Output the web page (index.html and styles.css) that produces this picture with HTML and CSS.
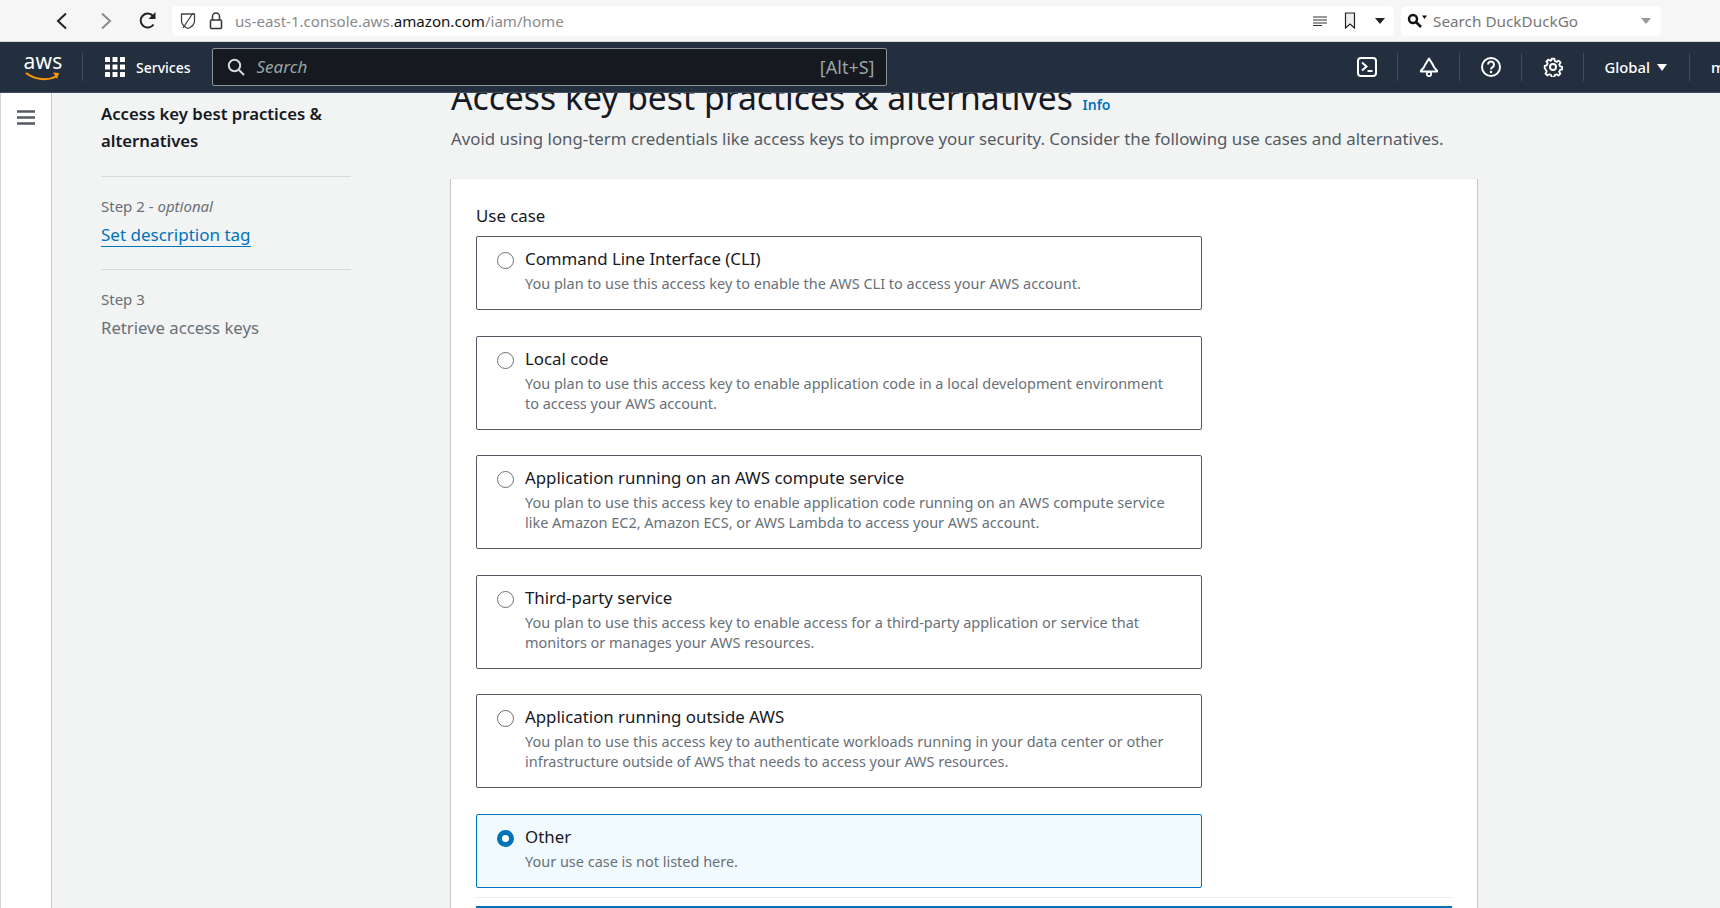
FILE: index.html
```html
<!DOCTYPE html>
<html lang="en">
<head>
<meta charset="utf-8">
<title>Access key best practices</title>
<link rel="stylesheet" href="styles.css">
</head>
<body>
<header class="browser">
  <svg class="b-back" width="14" height="18" viewBox="0 0 14 18"><path d="M11 1.5 3 9l8 7.500" fill="none" stroke="#222" stroke-width="2"/></svg>
  <svg class="b-fwd" width="14" height="18" viewBox="0 0 14 18"><path d="M3 1.500 11 9l-8 7.500" fill="none" stroke="#8a8a8a" stroke-width="2"/></svg>
  <svg class="b-reload" width="20" height="20" viewBox="0 0 20 20"><path d="M15.500 13.500A7 7 0 1 1 15 5" fill="none" stroke="#222" stroke-width="2"/><path d="M17.500 1v7h-7z" fill="#222"/></svg>
  <div class="urlbar">
    <svg class="u-shield" width="16" height="18" viewBox="0 0 16 18"><path d="M1.500 2h13v7c0 3.500-3 6-6.500 7.500C4.500 15 1.500 12.500 1.500 9z" fill="none" stroke="#444" stroke-width="1.300"/><path d="M13 1 3 16" stroke="#444" stroke-width="1.300"/></svg>
    <svg class="u-lock" width="14" height="18" viewBox="0 0 14 18"><path d="M3.500 8V4.500a3.500 3.500 0 0 1 7 0V8" fill="none" stroke="#333" stroke-width="1.500"/><rect x="1.500" y="8" width="11" height="8.500" rx="1" fill="none" stroke="#333" stroke-width="1.500"/></svg>
    <span class="url">us-east-1.console.aws.<b>amazon.com</b>/iam/home</span>
    <svg class="u-read" width="14" height="10" viewBox="0 0 14 10"><path d="M0 1h14M0 4h14M0 7h14M0 9.500h9" stroke="#333" stroke-width="1.200"/></svg>
    <svg class="u-mark" width="12" height="17" viewBox="0 0 12 17"><path d="M1.500 1h9v15L6 12l-4.500 4z" fill="#eee" stroke="#222" stroke-width="1.200"/></svg>
    <span class="u-caret"></span>
  </div>
  <div class="searchbar">
    <svg class="s-mag" width="20" height="15" viewBox="0 0 20 15"><circle cx="6" cy="6" r="4" fill="none" stroke="#111" stroke-width="2.400"/><path d="m9 9 5 5" stroke="#111" stroke-width="2.600"/><path d="M15 2.500h5L17.500 6z" fill="#111"/></svg>
    <span class="s-text">Search DuckDuckGo</span>
    <span class="s-caret"></span>
  </div>
</header>

<nav class="topnav">
  <div class="logo">
    <span class="logo-text">aws</span>
    <svg class="logo-smile" width="36" height="11" viewBox="0 0 36 11"><path d="M1 2c9 7 22 8 31 3" fill="none" stroke="#f90" stroke-width="2"/><path d="M28 1.500l6 .5-2 6z" fill="#f90"/></svg>
  </div>
  <span class="sep sep-logo"></span>
  <svg class="grid-icon" width="20" height="20" viewBox="0 0 20 20" fill="#fff"><rect width="5" height="5" rx=".5"/><rect x="7.500" width="5" height="5" rx=".5"/><rect x="15" width="5" height="5" rx=".5"/><rect y="7.500" width="5" height="5" rx=".5"/><rect x="7.500" y="7.500" width="5" height="5" rx=".5"/><rect x="15" y="7.500" width="5" height="5" rx=".5"/><rect y="15" width="5" height="5" rx=".5"/><rect x="7.500" y="15" width="5" height="5" rx=".5"/><rect x="15" y="15" width="5" height="5" rx=".5"/></svg>
  <span class="services">Services</span>
  <div class="navsearch">
    <svg width="18" height="18" viewBox="0 0 18 18"><circle cx="7.500" cy="7.500" r="5.700" fill="none" stroke="#d5dbdb" stroke-width="2"/><path d="m12 12 5 5" stroke="#d5dbdb" stroke-width="2"/></svg>
    <span class="ns-text">Search</span>
    <span class="ns-key">[Alt+S]</span>
  </div>
  <div class="navright">
    <svg class="ni" width="20" height="20" viewBox="0 0 20 20"><rect x="1" y="1" width="18" height="18" rx="3" fill="none" stroke="#fff" stroke-width="2"/><path d="m5 5.500 4.500 4-4.500 4" fill="none" stroke="#fff" stroke-width="2"/><path d="M10.500 14h5" stroke="#fff" stroke-width="2"/></svg>
    <span class="sep"></span>
    <svg class="ni" width="20" height="20" viewBox="0 0 20 20"><path d="M10 1.500 6 8c-.5 2-2 4-4 5.500v1h16v-1c-2-1.500-3.500-3.500-4-5.500z" fill="none" stroke="#fff" stroke-width="2" stroke-linejoin="round"/><circle cx="10" cy="17" r="2.200" fill="none" stroke="#fff" stroke-width="1.800"/></svg>
    <span class="sep"></span>
    <svg class="ni" width="20" height="20" viewBox="0 0 20 20"><circle cx="10" cy="10" r="9" fill="none" stroke="#fff" stroke-width="2"/><path d="M7 7.500a3 3 0 1 1 4.500 2.600c-1 .6-1.500 1.200-1.500 2.400" fill="none" stroke="#fff" stroke-width="2"/><circle cx="10" cy="15" r="1.200" fill="#fff"/></svg>
    <span class="sep"></span>
    <svg class="ni" width="20" height="20" viewBox="0 0 20 20"><path d="M8.500 1h3l.5 2.500 2 .9 2.200-1.300 2 2-1.400 2.200.9 2 2.300.5v2.800l-2.400.6-.9 2 1.300 2.100-2 2-2.100-1.300-2 .8-.6 2.200h-2.800l-.6-2.300-2-.8-2.100 1.300-2-2 1.300-2.100-.8-2L1 11.500V8.700l2.400-.6.800-2-1.300-2.100 2-2L7 3.300l1-.4z" transform="translate(.8 .8) scale(.92)" fill="none" stroke="#fff" stroke-width="2" stroke-linejoin="round"/><circle cx="10" cy="10" r="3" fill="none" stroke="#fff" stroke-width="2"/></svg>
    <span class="sep"></span>
    <span class="region">Global</span>
    <span class="region-caret"></span>
    <span class="sep sep-last"></span>
    <span class="acct">m</span>
  </div>
</nav>

<div class="page">
  <aside class="rail">
    <svg width="18" height="15" viewBox="0 0 18 15"><path d="M0 1.500h18M0 7.500h18M0 13.500h18" stroke="#545b64" stroke-width="2.400"/></svg>
  </aside>
  <section class="steps">
    <div class="step-current">Access key best practices &amp; alternatives</div>
    <hr class="step-rule">
    <div class="step-label">Step 2 - <i>optional</i></div>
    <a class="step-link" href="#">Set description tag</a>
    <hr class="step-rule">
    <div class="step-label">Step 3</div>
    <div class="step-muted">Retrieve access keys</div>
  </section>
  <main class="content">
    <h1 class="title">Access key best practices &amp; alternatives <a class="info" href="#">Info</a></h1>
    <p class="lead">Avoid using long-term credentials like access keys to improve your security. Consider the following use cases and alternatives.</p>
    <div class="panel">
      <div class="field-label">Use case</div>
      <div class="options">
        <div class="opt"><span class="radio"></span><div><div class="opt-t">Command Line Interface (CLI)</div><div class="opt-d">You plan to use this access key to enable the AWS CLI to access your AWS account.</div></div></div>
        <div class="opt"><span class="radio"></span><div><div class="opt-t">Local code</div><div class="opt-d">You plan to use this access key to enable application code in a local development environment<br>to access your AWS account.</div></div></div>
        <div class="opt"><span class="radio"></span><div><div class="opt-t">Application running on an AWS compute service</div><div class="opt-d">You plan to use this access key to enable application code running on an AWS compute service<br>like Amazon EC2, Amazon ECS, or AWS Lambda to access your AWS account.</div></div></div>
        <div class="opt"><span class="radio"></span><div><div class="opt-t">Third-party service</div><div class="opt-d">You plan to use this access key to enable access for a third-party application or service that<br>monitors or manages your AWS resources.</div></div></div>
        <div class="opt"><span class="radio"></span><div><div class="opt-t">Application running outside AWS</div><div class="opt-d">You plan to use this access key to authenticate workloads running in your data center or other<br>infrastructure outside of AWS that needs to access your AWS resources.</div></div></div>
        <div class="opt opt-on"><span class="radio radio-on"></span><div><div class="opt-t">Other</div><div class="opt-d">Your use case is not listed here.</div></div></div>
      </div>
      <hr class="panel-rule">
      <div class="panel-bar"></div>
    </div>
  </main>
</div>
</body>
</html>
```
FILE: styles.css
```css
* { box-sizing: border-box; }
html, body { margin: 0; height: 100%; overflow: hidden; }
body { font-family: "Noto Sans", "Open Sans", sans-serif; background: #f2f3f3; color: #16191f; display: flex; flex-direction: column; height: 908px; width: 1720px; }

.browser { height: 42px; background: #f6f6f6; border-bottom: 1px solid #d8d8d8; display: flex; align-items: center; flex: none; padding-left: 55px; }
.b-fwd { margin-left: 30px; }
.b-reload { margin-left: 25px; }
.urlbar { margin-left: 14px; width: 1222px; height: 30px; background: #fff; border-radius: 5px; display: flex; align-items: center; padding-left: 8px; }
.u-lock { margin-left: 13px; }
.url { margin-left: 12px; font-size: 15.100px; color: #8a8a8a; flex: 1; }
.url b { font-weight: 400; color: #111; }
.u-read { margin-right: 17px; }
.u-mark { margin-right: 19px; }
.u-caret { width: 0; height: 0; border: 5px solid transparent; border-top: 6px solid #222; border-bottom: 0; margin-right: 9px; }
.searchbar { margin-left: 7px; width: 260px; height: 30px; background: #fff; border-radius: 5px; display: flex; align-items: center; padding-left: 6px; }
.s-text { margin-left: 6px; font-size: 15.300px; color: #777; flex: 1; }
.s-caret { width: 0; height: 0; border: 5px solid transparent; border-top: 6px solid #999; border-bottom: 0; margin-right: 10px; }

.topnav { height: 51px; background: #232f3e; border-bottom: 1px solid #414d5c; display: flex; align-items: center; flex: none; color: #fff; padding-left: 25px; overflow: hidden; }
.logo { width: 36px; height: 32px; display: flex; flex-direction: column; align-items: center; position: relative; flex: none; }
.logo-text { font-size: 21px; line-height: 20px; font-weight: 400; letter-spacing: .2px; }
.logo-smile { margin-top: 0; }
.sep { width: 1px; height: 28px; background: #414d5c; flex: none; }
.sep-logo { margin-left: 21px; }
.grid-icon { margin-left: 22px; flex: none; }
.services { margin-left: 11px; font-size: 14px; font-weight: 500; flex: none; }
.navsearch { margin-left: 21px; width: 675px; height: 38px; background: #16191f; border: 1px solid #879596; border-radius: 2px; display: flex; align-items: center; padding: 0 11px 0 14px; flex: none; }
.ns-text { margin-left: 12px; font-style: italic; font-size: 17px; line-height: 22px; padding-bottom: 1px; color: #95a5a6; flex: 1; }
.ns-key { font-size: 18px; line-height: 22px; padding-bottom: 1px; color: #95a5a6; }
.navright { margin-left: 470px; display: flex; align-items: center; flex: none; }
.ni { flex: none; }
.navright .sep { margin: 0 20.500px; }
.region { font-size: 14.800px; font-weight: 500; }
.region-caret { width: 0; height: 0; border: 5px solid transparent; border-top: 7px solid #fff; border-bottom: 0; margin-left: 7px; }
.navright .sep-last { margin: 0 21px 0 22px; }
.acct { font-size: 14.800px; font-weight: 500; }

.page { flex: 1; min-height: 0; display: flex; overflow: hidden; }
.rail { width: 52px; flex: none; background: #fff; border-right: 1px solid #c4c8c8; border-left: 1px solid #d0d4d4; padding: 15px 0 0 16px; }
.steps { width: 250px; margin-left: 49px; flex: none; padding-top: 7px; }
.step-current { font-size: 16.700px; line-height: 27px; font-weight: 600; color: #16191f; }
.step-rule { border: 0; border-top: 1px solid #d5dbdb; margin: 22px 0 20px; }
.step-label { font-size: 15px; line-height: 18px; color: #687078; }
.step-link { display: inline-block; font-size: 17px; line-height: 23px; margin-top: 8px; color: #0073bb; text-decoration: none; border-bottom: 1px solid #0073bb; }
.step-muted { font-size: 16.700px; line-height: 24px; margin-top: 8px; color: #687078; }
.content { margin-left: 100px; width: 1026px; flex: none; }
.title { margin: -16px 0 0; font-size: 33.700px; line-height: 40px; font-weight: 400; color: #16191f; white-space: nowrap; }
.info { font-size: 14px; font-weight: 600; color: #0073bb; text-decoration: none; margin-left: 1px; vertical-align: 0; }
.lead { margin: 2px 0 0; font-size: 16.850px; line-height: 24px; color: #545b64; white-space: nowrap; }
.panel { margin-top: 27px; background: #fff; border-top: 1px solid #eaeded; box-shadow: 0 1px 1px 0 rgba(0,28,36,.3), 1px 1px 1px 0 rgba(0,28,36,.15), -1px 1px 1px 0 rgba(0,28,36,.15); padding: 25px 25px 0; height: 760px; }
.field-label { font-size: 16.850px; line-height: 24px; color: #16191f; }
.options { margin-top: 8px; display: flex; flex-direction: column; gap: 25.500px; width: 726px; }
.opt { display: flex; border: 1px solid #545b64; border-radius: 2px; padding: 11px 20px 15px 20px; background: #fff; }
.radio { width: 17px; height: 17px; border: 1.500px solid #687078; border-radius: 50%; flex: none; margin: 4px 11px 0 0; }
.radio-on { border: 5px solid #0073bb; background: #fff; }
.opt-on { background: #f1faff; border-color: #0073bb; }
.opt-t { font-size: 16.850px; line-height: 22px; color: #16191f; }
.opt-d { font-size: 14.480px; line-height: 20px; color: #687078; margin-top: 4px; }
.panel-rule { border: 0; border-top: 1px solid #eaeded; margin: 9px 0 8px; }
.panel-bar { height: 40px; background: #0073bb; }
```
